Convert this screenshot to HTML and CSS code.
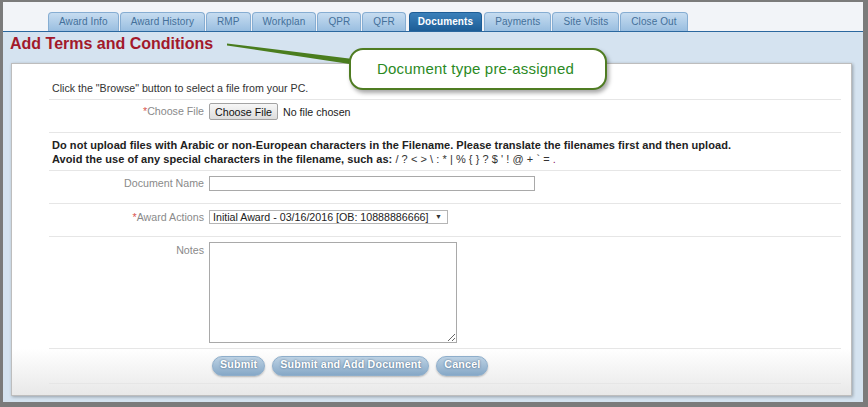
FILE: index.html
```html
<!DOCTYPE html>
<html>
<head>
<meta charset="utf-8">
<link rel="stylesheet" href="styles.css">
</head>
<body>
<div class="frame">
  <div class="tabbar">
    <span class="tab">Award Info</span>
    <span class="tab">Award History</span>
    <span class="tab">RMP</span>
    <span class="tab">Workplan</span>
    <span class="tab">QPR</span>
    <span class="tab">QFR</span>
    <span class="tab active">Documents</span>
    <span class="tab">Payments</span>
    <span class="tab">Site Visits</span>
    <span class="tab">Close Out</span>
  </div>
  <div class="content">
    <h1 class="title">Add Terms and Conditions</h1>
    <div class="panel">
      <div class="row intro">Click the "Browse" button to select a file from your PC.</div>
      <div class="row field file-row">
        <label class="lbl"><span class="req">*</span>Choose File</label>
        <input type="file" class="file">
      </div>
      <div class="row warn">
        <p>Do not upload files with Arabic or non-European characters in the Filename. Please translate the filenames first and then upload.<br>Avoid the use of any special characters in the filename, such as: <span class="chars">/ ? &lt; &gt; \ : * | % { } ? $ ' ! @ + ` = <span class="dot">.</span></span></p>
      </div>
      <div class="row field name-row">
        <label class="lbl">Document Name</label>
        <input type="text" class="text-in">
      </div>
      <div class="row field action-row">
        <label class="lbl"><span class="req">*</span>Award Actions</label>
        <span class="select"><span class="sel-text">Initial Award - 03/16/2016 [OB: 10888886666]</span><span class="arrow">▼</span></span>
      </div>
      <div class="row field notes-row">
        <label class="lbl">Notes</label>
        <textarea class="notes"></textarea>
      </div>
      <div class="row buttons">
        <button class="btn">Submit</button>
        <button class="btn">Submit and Add Document</button>
        <button class="btn">Cancel</button>
      </div>
    </div>
  </div>
  <svg class="pointer" width="860" height="400" viewBox="0 0 860 400">
    <polygon points="224,41.5 224,43.5 350,62.5 350,57" fill="#4a7d1e"/>
  </svg>
  <div class="callout">Document type pre-assigned</div>
</div>
</body>
</html>
```

FILE: styles.css
```css
html, body {
  margin: 0;
  padding: 0;
  background: #7b7b7b;
}
body {
  font-family: "Liberation Sans", Arial, sans-serif;
  font-size: 10.67px;
}
.frame {
  position: relative;
  margin: 2px 5px 5px 3px;
  width: 860px;
  height: 400px;
  background: #d5e3f0;
  overflow: hidden;
}
.tabbar {
  box-sizing: border-box;
  height: 30px;
  background: #f2f4f8;
  border-bottom: 1px solid #2b689f;
  display: flex;
  align-items: flex-end;
  gap: 1px;
  padding-left: 45px;
}
.tab {
  box-sizing: border-box;
  height: 19px;
  line-height: 18px;
  padding: 0 10px;
  border: 1px solid #86add2;
  border-bottom: none;
  border-radius: 4px 4px 0 0;
  background: linear-gradient(#c6dcf0, #99bee0);
  color: #44709a;
  font-size: 10px;
  letter-spacing: 0.1px;
  white-space: nowrap;
}
.tab.active {
  padding: 0 8px;
  margin: 0 1px 0 2px;
  background: linear-gradient(#3b80ba, #1d5d96);
  border-color: #1d5d96;
  color: #fff;
  font-weight: bold;
}
.content {
  padding: 0 11px 0 8px;
}
.title {
  margin: 2px 0 0 -1px;
  font-size: 16px;
  line-height: 20px;
  font-weight: bold;
  color: #a2192b;
}
.panel {
  margin-top: 9px;
  box-sizing: border-box;
  height: 333px;
  border: 1px solid #bdbdbd;
  box-shadow: 1px 1px 3px rgba(0,0,0,0.3);
  background: linear-gradient(#fff 0, #fff 86%, #e8e8e8 100%);
  padding: 13px 10px 11px 37px;
}
.row {
  box-sizing: border-box;
  display: flex;
  border-bottom: 1px solid #e6e6e6;
}
.intro {
  height: 23px;
  align-items: center;
  padding-left: 3px;
  color: #333;
}
.field {
  align-items: flex-start;
}
.lbl {
  flex: 0 0 160px;
  box-sizing: border-box;
  padding-right: 5px;
  text-align: right;
  color: #8a8a8a;
}
.req {
  color: #d9534f;
}
.file-row {
  height: 33px;
  padding-top: 3px;
}
.file-row .lbl {
  line-height: 17px;
}
.file {
  font-family: "Liberation Sans", Arial, sans-serif;
  font-size: 10.67px;
  color: #222;
  height: 17px;
}
.file::file-selector-button {
  box-sizing: border-box;
  width: 69px;
  font-family: "Liberation Sans", Arial, sans-serif;
  font-size: 10.67px;
  height: 17px;
  padding: 0;
  margin-right: 5px;
  border: 1px solid #a3a3a3;
  border-radius: 2px;
  background: linear-gradient(#f7f7f7, #dddddd);
  color: #111;
}
.warn {
  height: 38px;
  align-items: center;
  padding-left: 3px;
}
.warn p {
  margin: 0;
  font-size: 11px;
  font-weight: bold;
  line-height: 14px;
  color: #222;
  letter-spacing: 0.05px;
}
.chars {
  font-weight: normal;
  color: #333;
}
.dot {
  color: #8a1a6a;
}
.name-row {
  height: 33px;
  padding-top: 5px;
}
.name-row .lbl {
  line-height: 15px;
}
.text-in {
  box-sizing: border-box;
  width: 326px;
  height: 15px;
  border: 1px solid #a9a9a9;
  margin: 0;
  padding: 0;
}
.action-row {
  height: 33px;
  padding-top: 6px;
}
.action-row .lbl {
  line-height: 14px;
}
.select {
  box-sizing: border-box;
  display: flex;
  align-items: center;
  width: 239px;
  height: 14px;
  border: 1px solid #b5b5b5;
  padding-left: 3px;
  color: #222;
  font-size: 10.67px;
  line-height: 12px;
  white-space: nowrap;
}
.sel-text {
  flex: 1;
}
.arrow {
  font-size: 7px;
  color: #333;
  padding-right: 5px;
}
.notes-row {
  height: 112px;
  padding-top: 5px;
}
.notes-row .lbl {
  line-height: 14px;
  padding-top: 1px;
}
.notes {
  box-sizing: border-box;
  width: 248px;
  height: 101px;
  border: 1px solid #a9a9a9;
  margin: 0;
  padding: 2px;
}
.buttons {
  height: 35px;
  padding-top: 7px;
  padding-left: 163px;
  gap: 7px;
  align-items: flex-start;
}
.btn {
  box-sizing: border-box;
  height: 20px;
  padding: 0 7px 4px;
  line-height: 14px;
  border: 1px solid #8eaecb;
  border-radius: 10px;
  background: linear-gradient(#bcd1e3, #86a8c7);
  box-shadow: 0 1px 2px rgba(0,0,0,0.25);
  color: #fff;
  font-family: "Liberation Sans", Arial, sans-serif;
  font-size: 10.67px;
  font-weight: bold;
  text-shadow: 0 0 2px rgba(40,70,100,0.8);
  letter-spacing: 0.2px;
}
.pointer {
  position: absolute;
  left: 0;
  top: 0;
  pointer-events: none;
}
.callout {
  position: absolute;
  left: 346px;
  top: 46px;
  box-sizing: border-box;
  width: 258px;
  height: 42px;
  border: 2px solid #4f7c22;
  border-radius: 14px;
  background: #fff;
  box-shadow: 2px 3px 4px rgba(0,0,0,0.35);
  padding-left: 26px;
  line-height: 38px;
  font-size: 15px;
  color: #2b8a1f;
  letter-spacing: 0.2px;
}
```
